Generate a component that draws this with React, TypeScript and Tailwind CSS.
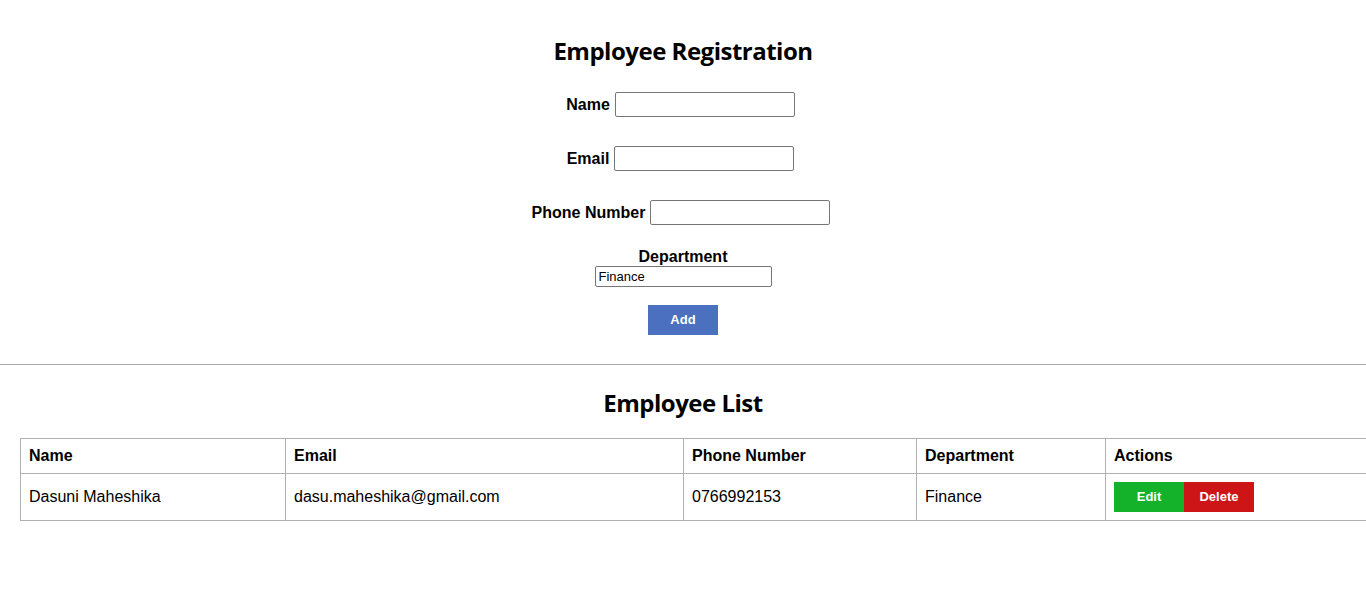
import React from "react";

const label = "text-[16px] font-bold text-black leading-[18px]";
const input =
  "w-[180px] h-[25px] border border-[#767676] rounded-[2px] bg-white px-[2px] text-[13px]";

export default function App() {
  return (
    <div className="w-[1366px] h-[605px] overflow-hidden bg-white text-black font-['Liberation_Sans',Arial,sans-serif]">
      <div className="flex flex-col items-center pt-[35px]">
        <h2 className="text-[24px] leading-[32px] font-bold font-['Open_Sans','Noto_Sans',sans-serif] tracking-[-0.5px]">
          Employee Registration
        </h2>

        <div className="mt-[25px] flex items-center gap-[5px] pr-[5px]">
          <span className={label}>Name</span>
          <input className={input} />
        </div>
        <div className="mt-[29px] flex items-center gap-[5px] pr-[5px]">
          <span className={label}>Email</span>
          <input className={input} />
        </div>
        <div className="mt-[29px] flex items-center gap-[5px] pr-[4px]">
          <span className={label}>Phone Number</span>
          <input className={input} />
        </div>

        <div className="mt-[23px] flex flex-col items-center">
          <span className={label}>Department</span>
          <input
            defaultValue="Finance"
            className="w-[177px] h-[21px] border border-[#767676] rounded-[2px] px-[3px] text-[13px] leading-[15px]"
          />
        </div>

        <button className="mt-[18px] w-[70px] h-[30px] bg-[#4a70bf] text-white text-[13px] font-bold">
          Add
        </button>
      </div>

      <hr className="mt-[29px] border-0 border-t border-[#a9a9a9]" />

      <h2 className="mt-[22px] text-center text-[24px] leading-[32px] font-bold font-['Open_Sans','Noto_Sans',sans-serif] tracking-[-0.5px]">
        Employee List
      </h2>

      <table className="mt-[19px] ml-[20px] w-[1366px] table-fixed border-collapse text-[16px] leading-[18px]">
        <colgroup>
          <col className="w-[265px]" />
          <col className="w-[398px]" />
          <col className="w-[233px]" />
          <col className="w-[189px]" />
          <col className="w-[281px]" />
        </colgroup>
        <thead>
          <tr>
            {["Name", "Email", "Phone Number", "Department", "Actions"].map((h) => (
              <th key={h} className="border border-[#b0b0b0] px-[8px] py-[8px] text-left font-bold">
                {h}
              </th>
            ))}
          </tr>
        </thead>
        <tbody>
          <tr>
            <td className="border border-[#b0b0b0] px-[8px] py-[8px]">Dasuni Maheshika</td>
            <td className="border border-[#b0b0b0] px-[8px] py-[8px]">dasu.maheshika@gmail.com</td>
            <td className="border border-[#b0b0b0] px-[8px] py-[8px]">0766992153</td>
            <td className="border border-[#b0b0b0] px-[8px] py-[8px]">Finance</td>
            <td className="border border-[#b0b0b0] px-[8px] py-[8px]">
              <div className="flex">
                <button className="w-[70px] h-[30px] bg-[#14b22a] text-white text-[13px] font-bold">
                  Edit
                </button>
                <button className="w-[70px] h-[30px] bg-[#cd1518] text-white text-[13px] font-bold">
                  Delete
                </button>
              </div>
            </td>
          </tr>
        </tbody>
      </table>
    </div>
  );
}
